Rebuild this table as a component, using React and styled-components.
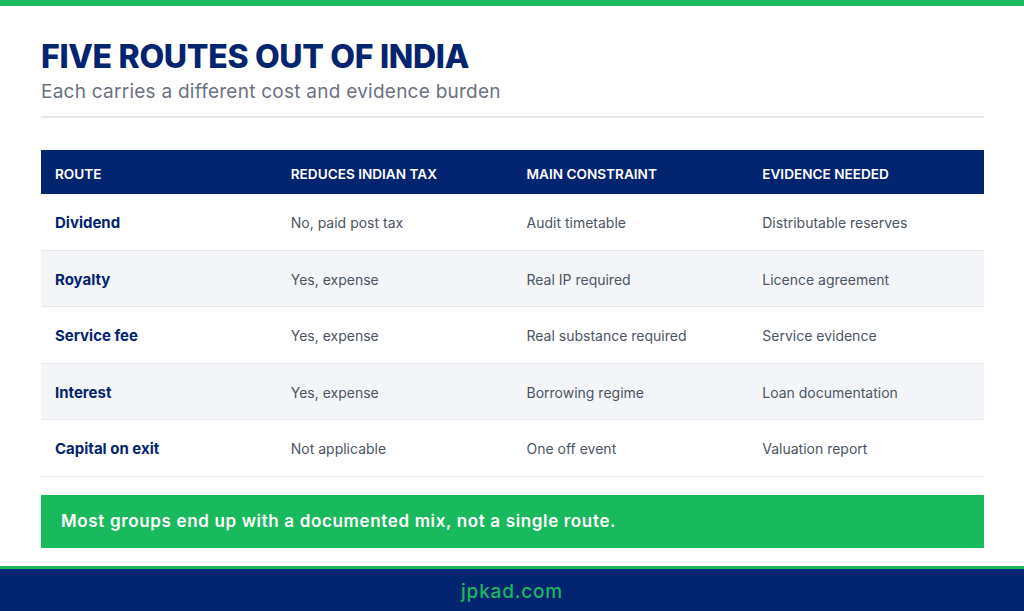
import React from "react";
import styled, { createGlobalStyle } from "styled-components";

const Global = createGlobalStyle`
  html, body { margin: 0; padding: 0; background: #ffffff; }
  body { font-family: Poppins, Inter, "Open Sans", sans-serif; }
  * { box-sizing: border-box; }
`;

const NAVY = "#03246f";
const GREEN = "#19b95e";

const Page = styled.div`
  width: 1024px;
  height: 611px;
  display: flex;
  flex-direction: column;
  overflow: hidden;
`;

const TopBar = styled.div`
  height: 6px;
  background: ${GREEN};
  flex: none;
`;

const Main = styled.main`
  flex: 1;
  padding: 31px 40px 0 41px;
  display: flex;
  flex-direction: column;
`;

const Title = styled.h1`
  margin: 0;
  font-family: Inter, sans-serif;
  font-weight: 800;
  font-size: 32px;
  line-height: 40px;
  letter-spacing: -0.3px;
  color: ${NAVY};
`;

const Subtitle = styled.p`
  margin: 0;
  font-family: Inter, sans-serif;
  font-size: 19px;
  line-height: 29px;
  letter-spacing: 0.25px;
  color: #6b7280;
`;

const Divider = styled.hr`
  margin: 10px 0 0;
  border: none;
  height: 2px;
  background: #e5e7eb;
`;

const Table = styled.div`
  margin-top: 32px;
  display: grid;
  grid-template-columns: repeat(4, 1fr);
`;

const HeadCell = styled.div`
  height: 44px;
  background: ${NAVY};
  display: flex;
  align-items: center;
  padding: 3px 0 0 14px;
  font-family: Inter, sans-serif;
  font-weight: 600;
  font-size: 13.6px;
  color: #ffffff;
`;

const Cell = styled.div`
  height: 56.5px;
  display: flex;
  align-items: center;
  padding: 2px 0 0 14px;
  border-bottom: 1px solid #e5e7eb;
  background: ${(p) => (p.$alt ? "#f4f5f9" : "#ffffff")};
  font-family: Inter, sans-serif;
  font-size: ${(p) => (p.$first ? "15px" : "14px")};
  font-weight: ${(p) => (p.$first ? 700 : 400)};
  color: ${(p) => (p.$first ? NAVY : "#4b5563")};
`;

const Callout = styled.div`
  margin-top: 18px;
  height: 53px;
  background: ${GREEN};
  display: flex;
  align-items: center;
  padding-left: 20px;
  font-family: Inter, sans-serif;
  font-weight: 600;
  font-size: 17px;
  letter-spacing: 0.65px;
  color: #ffffff;
`;

const Footer = styled.footer`
  flex: none;
  height: 45px;
  border-top: 3px solid ${GREEN};
  background: ${NAVY};
  display: flex;
  align-items: center;
  justify-content: center;
  padding-top: 2px;
  font-family: Inter, sans-serif;
  font-weight: 500;
  font-size: 19px;
  letter-spacing: 0.8px;
  color: ${GREEN};
`;

const headers = ["ROUTE", "REDUCES INDIAN TAX", "MAIN CONSTRAINT", "EVIDENCE NEEDED"];
const rows = [
  ["Dividend", "No, paid post tax", "Audit timetable", "Distributable reserves"],
  ["Royalty", "Yes, expense", "Real IP required", "Licence agreement"],
  ["Service fee", "Yes, expense", "Real substance required", "Service evidence"],
  ["Interest", "Yes, expense", "Borrowing regime", "Loan documentation"],
  ["Capital on exit", "Not applicable", "One off event", "Valuation report"],
];

export default function App() {
  return (
    <>
      <Global />
      <Page>
        <TopBar />
        <Main>
          <Title>FIVE ROUTES OUT OF INDIA</Title>
          <Subtitle>Each carries a different cost and evidence burden</Subtitle>
          <Divider />
          <Table>
            {headers.map((h) => (
              <HeadCell key={h}>{h}</HeadCell>
            ))}
            {rows.map((r, i) =>
              r.map((c, j) => (
                <Cell key={i + "-" + j} $alt={i % 2 === 1} $first={j === 0}>
                  {c}
                </Cell>
              ))
            )}
          </Table>
          <Callout>Most groups end up with a documented mix, not a single route.</Callout>
        </Main>
        <Footer>jpkad.com</Footer>
      </Page>
    </>
  );
}
